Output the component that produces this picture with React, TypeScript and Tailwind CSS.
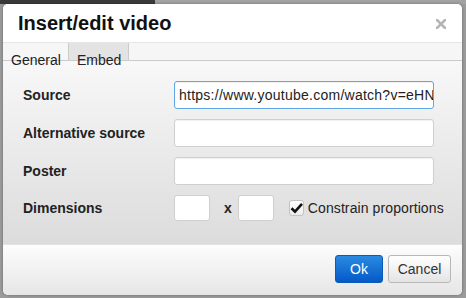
import React from "react";

const font = { fontFamily: '"Liberation Sans", Arial, sans-serif' };

const TextBox = ({ value, focused }: { value?: string; focused?: boolean }) => (
  <div
    className={`h-[28px] w-[260px] overflow-hidden whitespace-nowrap rounded-[3px] border bg-white pl-[4px] text-[14px] leading-[26px] tracking-[0.25px] text-[#222] shadow-[inset_0_1px_1px_rgba(0,0,0,0.06)] ${
      focused ? "border-[#5ea6e6]" : "border-[#cfcfcf]"
    }`}
  >
    {value}
  </div>
);

const Row = ({ label, children }: { label: string; children: React.ReactNode }) => (
  <div className="flex items-center">
    <div className="w-[151px] text-[14px] font-bold leading-[16px] text-[#222]">{label}</div>
    {children}
  </div>
);

export default function App() {
  return (
    <div className="flex h-[298px] w-[466px] flex-col bg-[#9b9b9b] text-[#222]" style={font}>
      {/* strip of the page above the dialog */}
      <div className="flex h-[4px] shrink-0">
        <div className="w-[155px] bg-[#3a3a3a]" />
        <div className="flex-1 bg-[#a3a3a3]" />
      </div>

      <div className="flex flex-1 pl-[3px] pr-[4px] pb-[3px]">
        <div className="flex w-[459px] flex-col overflow-hidden rounded-[5px] bg-white shadow-[0_0_3px_rgba(0,0,0,0.35)]">
          {/* header */}
          <div className="flex h-[39px] shrink-0 items-center justify-between border-b border-[#e6e6e6] bg-white pl-[15px] pr-[16px]">
            <div className="text-[20px] font-bold leading-[24px] text-[#111]">Insert/edit video</div>
            <svg width="10" height="10" viewBox="0 0 10 10" className="mt-[1px]">
              <path d="M1 1 L9 9 M9 1 L1 9" stroke="#b4b4b4" strokeWidth="2.6" strokeLinecap="square" />
            </svg>
          </div>

          {/* tabs */}
          <div className="relative z-10 flex h-[18px] shrink-0 border-b border-[#cbcbcb] bg-[#f6f6f6] text-[14px] leading-[16px] text-[#222]">
            <div className="h-[17px] w-[65px] whitespace-nowrap pl-[8px] pt-[9px]">General</div>
            <div className="h-[17px] w-[61px] whitespace-nowrap border-x border-[#cccccc] bg-[#e3e3e3] pl-[8px] pt-[9px]">
              Embed
            </div>
          </div>

          {/* form */}
          <div className="flex flex-1 flex-col gap-[10px] bg-gradient-to-b from-[#f8f8f8] to-[#dcdcdc] pl-[20px] pt-[20px]">
            <Row label="Source">
              <TextBox value="https://www.youtube.com/watch?v=eHNmUdW0Df8" focused />
            </Row>
            <Row label="Alternative source">
              <TextBox />
            </Row>
            <Row label="Poster">
              <TextBox />
            </Row>
            <Row label="Dimensions">
              <div className="flex items-center">
                <div className="h-[26px] w-[36px] rounded-[3px] border border-[#cfcfcf] bg-white" />
                <span className="ml-[14px] mr-[6px] text-[14px] font-bold leading-[16px]">x</span>
                <div className="h-[26px] w-[36px] rounded-[3px] border border-[#cfcfcf] bg-white" />
                <div className="ml-[15px] flex h-[16px] w-[15px] items-center justify-center rounded-[3px] border border-[#c2c2c2] bg-gradient-to-b from-white to-[#ececec]">
                  <svg width="13" height="12" viewBox="0 0 13 12">
                    <path d="M1.5 6.2 L5 9.6 L12 1.8" fill="none" stroke="#111" strokeWidth="2.6" />
                  </svg>
                </div>
                <span className="ml-[4px] text-[14px] leading-[16px] tracking-[0.1px] text-[#222]">
                  Constrain proportions
                </span>
              </div>
            </Row>
          </div>

          {/* footer */}
          <div className="flex h-[51px] shrink-0 items-start justify-end gap-[5px] border-t border-[#e2e2e2] bg-gradient-to-b from-[#fdfdfd] to-[#e6e6e6] pr-[11px] pt-[10px]">
            <button className="h-[28px] w-[48px] rounded-[3px] border border-[#0a5bb8] bg-gradient-to-b from-[#2a8ae2] to-[#0559c7] text-[14px] text-white">
              Ok
            </button>
            <button className="h-[28px] w-[63px] rounded-[3px] border border-[#b8b8b8] bg-gradient-to-b from-white to-[#e4e4e4] text-[14px] text-[#333]">
              Cancel
            </button>
          </div>
        </div>
      </div>
    </div>
  );
}
